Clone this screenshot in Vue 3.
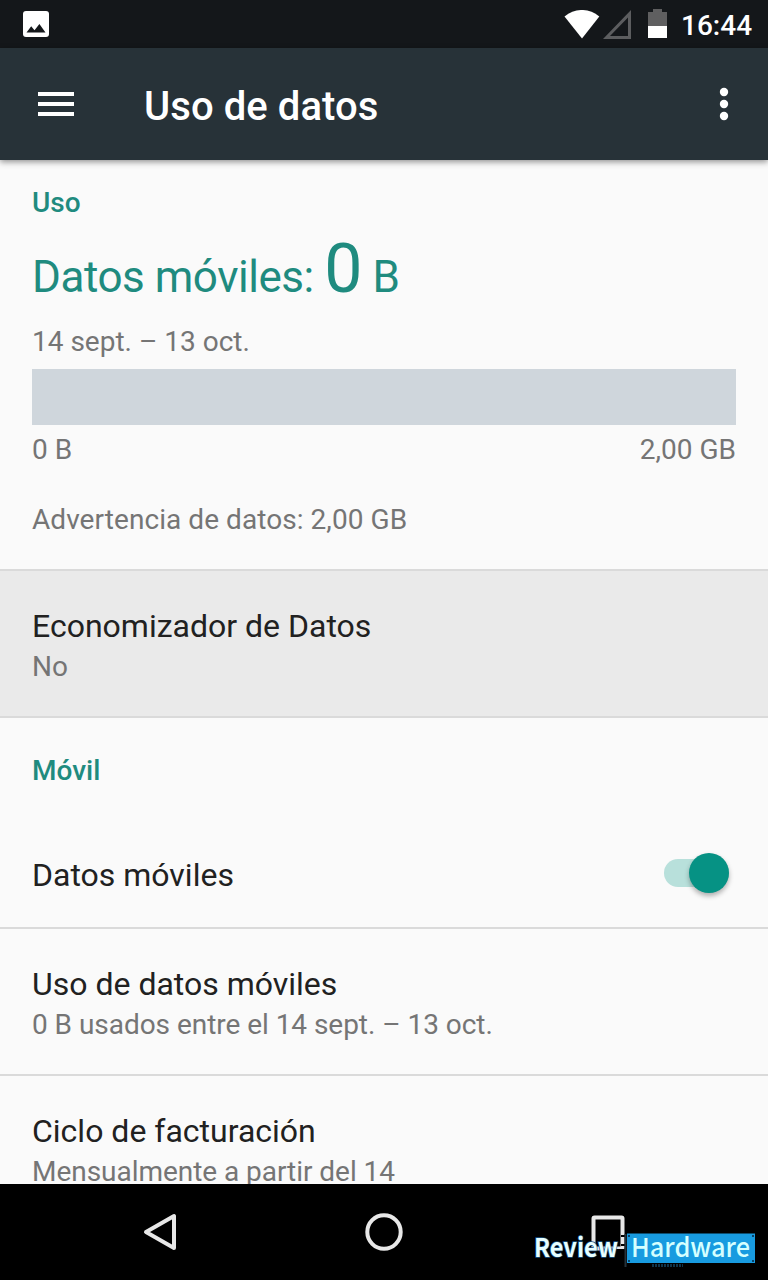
<script setup>
const rows = [
  { title: 'Uso de datos móviles', note: '0 B usados entre el 14 sept. – 13 oct.' },
  { title: 'Ciclo de facturación', note: 'Mensualmente a partir del 14' },
]
</script>

<template>
  <div class="screen">
    <header class="status">
      <svg class="photo" width="26" height="26" viewBox="0 0 26 26">
        <rect width="26" height="26" rx="3" fill="#fff" />
        <path d="M3.5 21.5 8.2 15.3 11.5 19.3 16.4 13 22.5 21.5Z" fill="#14171a" />
      </svg>
      <svg class="wifi" width="36" height="30" viewBox="0 0 36 30">
        <path d="M0.5 6.5C11-2.2 25-2.2 35.3 6.5L18 28.6Z" fill="#fff" />
      </svg>
      <svg class="signal" width="29" height="30" viewBox="0 0 29 30">
        <path d="M28 0V29H0ZM25 7.4 7 26H25Z" fill="#5c5d5f" fill-rule="evenodd" />
      </svg>
      <svg class="battery" width="19" height="30" viewBox="0 0 19 30">
        <path d="M5 0H14V3H19V17H0V3H5Z" fill="#5f5f60" />
        <path d="M0 17H19V29H0Z" fill="#fff" />
      </svg>
      <span class="clock">16:44</span>
    </header>

    <div class="toolbar">
      <svg class="menu" width="36" height="24" viewBox="0 0 36 24" fill="#fff">
        <path d="M0 0H36V4H0ZM0 10H36V14H0ZM0 20H36V24H0Z" />
      </svg>
      <h1>Uso de datos</h1>
      <svg class="more" width="10" height="34" viewBox="0 0 10 34" fill="#fff">
        <circle cx="5" cy="5" r="4.2" /><circle cx="5" cy="17" r="4.2" /><circle cx="5" cy="29" r="4.2" />
      </svg>
    </div>

    <main>
      <section class="usage">
        <h2>Uso</h2>
        <p class="total">Datos móviles: <span class="amount">0</span> B</p>
        <p class="small period">14 sept. – 13 oct.</p>
        <div class="bar"></div>
        <div class="small scale"><span>0 B</span><span>2,00 GB</span></div>
        <p class="small warning">Advertencia de datos: 2,00 GB</p>
      </section>
      <section class="row pressed">
        <p class="title">Economizador de Datos</p>
        <p class="small">No</p>
      </section>
      <h2 class="mobile">Móvil</h2>
      <section class="toggle">
        <p class="title">Datos móviles</p>
        <span class="switch"><span class="thumb"></span></span>
      </section>
      <section v-for="row in rows" :key="row.title" class="row">
        <p class="title">{{ row.title }}</p>
        <p class="small">{{ row.note }}</p>
      </section>
    </main>

    <nav>
      <svg width="768" height="96" viewBox="0 0 768 96" fill="none" stroke="#e8e8e8" stroke-width="4" stroke-linejoin="round">
        <path d="M174 32V64L146 48Z" />
        <circle cx="384" cy="48" r="16.7" />
        <rect x="593.5" y="33.5" width="29" height="31" rx="1" />
      </svg>
      <svg class="brand" width="248" height="60" viewBox="0 0 248 60">
        <path d="M82 33H106V49H82Z" fill="#000" />
        <path d="M101 19h5v2h-5zM101 28h5v2h-5z" fill="#000" />
        <path d="M105.5 18V51" stroke="#26323a" stroke-width="2" />
        <path d="M132 49.5H163" stroke="#10344a" stroke-width="3" stroke-dasharray="2 1" />
        <rect x="107" y="17.5" width="128" height="29.5" fill="#189be0" />
        <path d="M108 19h2v2h-2zM232 19h2v2h-2zM108 44h2v2h-2zM232 44h2v2h-2z" fill="#0a4268" />
        <text class="review" x="14" y="41" textLength="84" lengthAdjust="spacingAndGlyphs">Review</text>
        <text class="hardware" x="111" y="41" textLength="119" lengthAdjust="spacingAndGlyphs">Hardware</text>
      </svg>
    </nav>
  </div>
</template>

<style>
body { margin: 0; }
</style>

<style scoped>
.screen {
  width: 768px;
  height: 1280px;
  display: flex;
  flex-direction: column;
  overflow: hidden;
  background: #fafafa;
  font-family: Roboto, "Liberation Sans", sans-serif;
}
h1, h2, p { margin: 0; }
.status {
  height: 48px;
  flex: none;
  display: flex;
  align-items: flex-start;
  background: #14171a;
}
.photo { margin: 11px 0 0 23px; }
.wifi { margin: 10px 0 0 515px; }
.signal { margin: 10px 0 0 3px; }
.battery { margin: 9px 0 0 16px; }
.clock {
  margin: 9px 0 0 14px;
  font-size: 28px;
  line-height: 34px;
  font-weight: 500;
  color: #fff;
}
.toolbar {
  position: relative;
  z-index: 1;
  height: 112px;
  flex: none;
  display: flex;
  align-items: center;
  background: #273238;
  box-shadow: 0 2px 6px rgba(0, 0, 0, 0.42);
}
.menu { margin-left: 38px; }
h1 {
  margin: 5px 0 0 70px;
  font-size: 40px;
  line-height: 48px;
  font-weight: 500;
  letter-spacing: 0.08px;
  color: #fff;
}
.more { margin: 0 39px 0 auto; }
main {
  flex: 1;
  min-height: 0;
  overflow: hidden;
}
h2 {
  font-size: 28px;
  line-height: 32px;
  font-weight: 500;
  color: #1f8b7f;
}
.usage {
  box-sizing: border-box;
  height: 411px;
  padding: 27px 32px 0;
  border-bottom: 2px solid #dadada;
}
.total {
  margin-top: 18px;
  font-size: 44px;
  line-height: 80px;
  height: 80px;
  letter-spacing: -0.46px;
  color: #1f8b7f;
}
.amount { font-size: 68px; line-height: 0; }
.small {
  font-size: 28px;
  line-height: 32px;
  color: #757575;
}
.period { margin-top: 9px; }
.bar {
  height: 56px;
  margin: 11px 0 9px;
  background: #cfd6dc;
}
.scale { display: flex; justify-content: space-between; }
.warning { margin-top: 38px; letter-spacing: 0.06px; }
.title {
  font-size: 32px;
  line-height: 38px;
  color: #212121;
}
.row {
  box-sizing: border-box;
  height: 147px;
  padding: 36px 32px 0;
  border-bottom: 2px solid #dadada;
}
.row .small { margin-top: 6px; letter-spacing: -0.04px; }
.pressed { background: #eaeaea; }
.mobile { padding: 37px 32px 0; }
.toggle {
  box-sizing: border-box;
  height: 142px;
  padding: 65px 39px 0 32px;
  display: flex;
  align-items: flex-start;
  justify-content: space-between;
  border-bottom: 2px solid #dadada;
}
.toggle .title { margin-top: 4px; }
.switch {
  width: 65px;
  height: 28px;
  margin-top: 7px;
  display: flex;
  align-items: center;
  justify-content: flex-end;
  border-radius: 14px;
  background: #b8e0db;
}
.thumb {
  width: 40px;
  height: 40px;
  flex: none;
  border-radius: 50%;
  background: #069284;
  box-shadow: 0 3px 5px rgba(0, 0, 0, 0.3);
}
nav {
  position: relative;
  height: 96px;
  flex: none;
  background: #000;
}
nav svg { display: block; }
nav .brand { position: absolute; left: 520px; top: 32px; }
.brand text { font-family: "Noto Sans CJK SC", "Noto Sans", sans-serif; font-size: 26px; }
.review { font-weight: 700; fill: #e8ffff; stroke: #164f80; stroke-width: 1.5px; paint-order: stroke; }
.hardware { font-weight: 500; fill: #d5ffff; }
</style>
